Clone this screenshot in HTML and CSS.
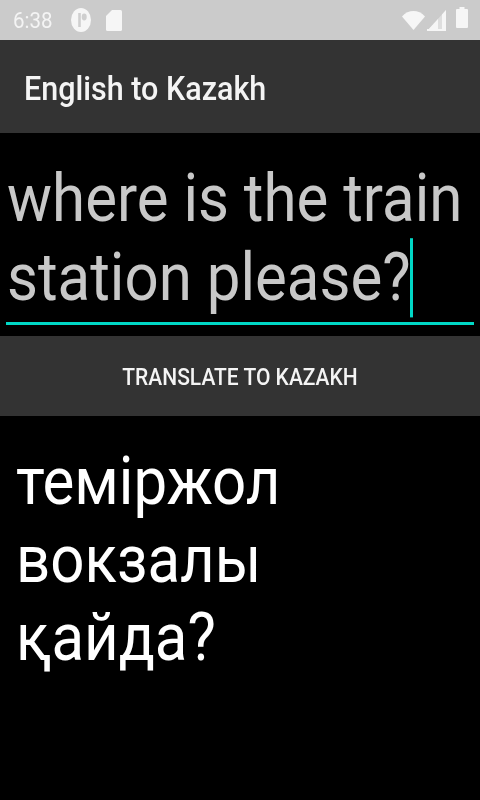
FILE: index.html
```html
<!DOCTYPE html>
<html lang="en">
<head>
<meta charset="utf-8">
<title>English to Kazakh</title>
<link rel="stylesheet" href="styles.css">
</head>
<body>
<div class="screen">
  <header class="status">
    <div class="status-left">
      <span class="time">6:38</span>
      <svg class="ic-p" viewBox="0 0 20 24" preserveAspectRatio="none"><ellipse cx="10" cy="12" rx="10" ry="12" fill="#f6f6f6"/><rect x="7.2" y="5" width="2.6" height="14" fill="#cfcfcf"/><ellipse cx="13.2" cy="9" rx="2.5" ry="3.4" fill="#cfcfcf"/></svg>
      <svg class="ic-sd" viewBox="0 0 16 21"><path d="M6 0H14.5A1.5 1.5 0 0 1 16 1.5V19.5A1.5 1.5 0 0 1 14.5 21H1.5A1.5 1.5 0 0 1 0 19.5V6Z" fill="#f6f6f6"/></svg>
    </div>
    <div class="status-right">
      <svg class="ic-wifi" viewBox="0 0 23 19" preserveAspectRatio="none"><path d="M0 5.5C6.5 -1.8 16.5 -1.8 23 5.5L11.5 19Z" fill="#f6f6f6"/></svg>
      <svg class="ic-signal" viewBox="0 0 19 21"><path d="M0 21L19 0V21Z" fill="#f6f6f6" fill-opacity=".45"/><path d="M0 21L11 9V21ZM15 4.5L19 0V21H0V19H15Z" fill="#f6f6f6"/></svg>
      <svg class="ic-batt" viewBox="0 0 12 21" preserveAspectRatio="none"><path d="M3.5 0H8.5V2H11A1 1 0 0 1 12 3V20A1 1 0 0 1 11 21H1A1 1 0 0 1 0 20V3A1 1 0 0 1 1 2H3.5Z" fill="#f6f6f6"/></svg>
    </div>
  </header>
  <div class="appbar"><span class="appbar-title">English to Kazakh</span></div>
  <div class="field">
    <div class="input">where is the train station please?<span class="caret"></span></div>
  </div>
  <button class="translate" type="button"><span class="translate-label">TRANSLATE TO KAZAKH</span></button>
  <div class="result">
    <div class="result-text">темiржол вокзалы қайда?</div>
  </div>
</div>
</body>
</html>
```
FILE: styles.css
```css
* { box-sizing: border-box; }
html, body { margin: 0; padding: 0; background: #000; }
.screen { width: 480px; height: 800px; overflow: hidden; display: flex; flex-direction: column; background: #000; font-family: Roboto, "Noto Sans", sans-serif; filter: blur(0.7px); }
.status { height: 40px; flex: none; background: #cbcbcb; display: flex; justify-content: space-between; align-items: center; padding: 0 12px 0 13px; }
.status-left, .status-right { display: flex; align-items: center; }
.time { font-size: 20.5px; color: #f4f4f4; transform: scaleY(1.08); }
.ic-p { width: 20px; height: 24px; margin-left: 18px; }
.ic-sd { width: 16px; height: 21px; margin-left: 15px; }
.ic-wifi { width: 23px; height: 19px; }
.ic-signal { width: 19px; height: 21px; margin-left: 2px; }
.ic-batt { width: 12px; height: 21px; margin-left: 10px; margin-top: -5px; }
.appbar { height: 93px; flex: none; background: #333; color: #f4f4f4; display: flex; align-items: center; padding: 3px 0 0 24px; }
.appbar-title { font-size: 30.5px; font-weight: 500; transform: scaleY(1.06); }
.field { height: 192px; flex: none; margin: 0 6px; border-bottom: 3px solid #00d8c6; padding-top: 26px; }
.input { font-size: 60px; line-height: 72px; color: #c8c8c8; padding-left: 1px; transform: scaleY(1.1); transform-origin: top; }
.caret { display: inline-block; width: 3px; height: 72px; margin-left: -1px; background: #00d8c6; vertical-align: -15.5px; }
.translate { flex: none; height: 80px; margin-top: 11px; padding: 2px 0 0; border: 0; background: #333; color: #f4f4f4; font: 500 21px Roboto, sans-serif; }
.translate-label { display: inline-block; transform: scaleY(1.1); }
.result { padding: 26px 0 0 16px; }
.result-text { width: 290px; font-size: 60px; line-height: 71px; color: #fff; transform: scaleY(1.1); transform-origin: top; }
```
